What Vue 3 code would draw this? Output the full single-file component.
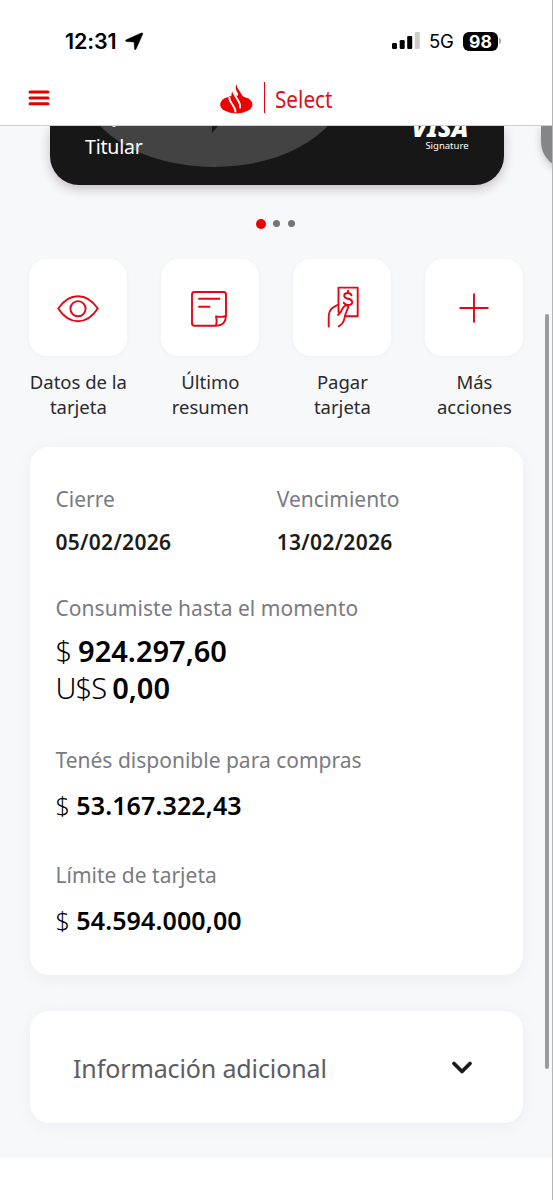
<script setup>
const details = [
  { id: 'a', label: 'Tenés disponible para compras', value: '53.167.322,43' },
  { id: 'b', label: 'Límite de tarjeta', value: '54.594.000,00' },
]
</script>

<template>
  <div class="screen">
    <header class="top">
      <div class="status">
        <span class="clock">12:31</span>
        <svg class="arrow" width="19" height="19" viewBox="0 0 19 19"><path d="M1.300 7.800 16.400 1.100Q18.200.5 17.600 2.300L11 17Q9.900 18.700 9.500 16.700L9.200 10.700Q9.100 10 8.400 9.900L1.600 9.500Q-.3 8.800 1.300 7.800Z" stroke="#000" stroke-width=".6" /></svg>
        <svg class="signal" width="28" height="18" viewBox="0 0 28 18">
          <rect x="0" y="11" width="5" height="6" rx="1.300" />
          <rect x="7.700" y="8" width="5" height="9" rx="1.300" />
          <rect x="15.200" y="4" width="5" height="13" rx="1.300" />
          <rect x="22.800" y="0" width="5" height="17" rx="1.300" fill="#ccc" />
        </svg>
        <span class="net">5G</span>
        <span class="battery">98</span>
        <i class="nub"></i>
      </div>
      <div class="bar">
        <svg class="menu" width="22" height="16" viewBox="0 0 22 16" stroke="#e60000" stroke-width="3" stroke-linecap="round"><path d="M2 2H20M2 8H20M2 13.700H20" /></svg>
        <svg class="flame" width="33" height="30" viewBox="0 0 33 30">
          <ellipse cx="16.300" cy="20.500" rx="16.100" ry="8.900" fill="#ec0000" />
          <path d="M16.600.3Q14.700 3.500 16.600 7L18 9.500V20H24V19Q25 15 22.300 11.500L18.200 5Q16.500 2.500 16.600.3ZM12.200 7.300Q10.500 10.500 12.300 14L17 22L20 18L13.800 10.500Q12.300 9 12.200 7.300Z" fill="#ec0000" />
          <path d="M9.300 13Q9.300 15.500 10.700 17.800L14.200 23.500Q15.600 26 15.400 28.300M13.600 6.500Q13.700 9.300 15.200 11.700L19 18Q20.700 21 20 24.200" fill="none" stroke="#fff" stroke-width="1.900" />
        </svg>
        <i class="divider"></i>
        <span class="brand">Select</span>
      </div>
    </header>

    <main>
      <section class="carousel">
        <div class="card">
          <svg class="oval" width="453" height="60" viewBox="0 0 453 60">
            <ellipse cx="164" cy="-44" rx="133" ry="85" fill="#434343" />
            <path d="M162 0H168L162 7Z" fill="#171717" />
            <circle cx="64" cy="-1.500" r="2.500" fill="#eee" />
          </svg>
          <span class="holder">Titular</span>
          <div class="visa"><b>VISA</b><span>Signature</span></div>
        </div>
        <div class="next"></div>
      </section>
      <div class="dots"><i class="on"></i><i></i><i></i></div>

      <nav class="actions">
        <div class="action">
          <div class="tile">
            <svg width="44" height="44" viewBox="0 0 44 44"><path d="M2.200 22.500Q10.500 10.200 22 10.200T41.800 22.500Q33.500 35.200 22 35.200T2.200 22.500Z" /><circle cx="22" cy="22.700" r="7.600" /></svg>
          </div>
          <span>Datos de la<br />tarjeta</span>
        </div>
        <div class="action">
          <div class="tile">
            <svg width="44" height="44" viewBox="0 0 44 44"><path d="M28 39.800H6.500Q4 39.800 4 37.300V8.500Q4 6 6.500 6H35.500Q38 6 38 8.500V30Q37.500 39.800 28 39.800ZM28 39.800Q29.500 35.500 28 30.500Q33 31.500 38 30M11 12.800H31.500M11 20.700H21.500" /></svg>
          </div>
          <span>Último<br />resumen</span>
        </div>
        <div class="action">
          <div class="tile">
            <svg class="hand" width="44" height="44" viewBox="0 0 44 44"><path d="M13.500 26V1.600H32.700V30.200H21.500M3.700 40.500V32Q3.700 24 8 21.500L13.300 18.500M13 29Q16.500 26 17.500 22.500Q19.700 18.800 22.500 19.500Q24 20.200 22.500 23L20 29.500Q19 38 13.700 40.300M26.500 9.300Q25.500 7 22.800 7Q19.200 7 19.200 9.800Q19.200 12 23 12.700Q27.200 13.500 27.200 16Q27.200 19 23.200 19Q20 19 18.800 16.700M23 4.700V7M23 19V20.500" /></svg>
          </div>
          <span>Pagar<br />tarjeta</span>
        </div>
        <div class="action">
          <div class="tile">
            <svg width="44" height="44" viewBox="0 0 44 44"><path d="M22 8.200V35.800M8.200 22H35.800" /></svg>
          </div>
          <span>Más<br />acciones</span>
        </div>
      </nav>

      <section class="panel">
        <div class="dates">
          <div><p class="label">Cierre</p><p class="date">05/02/2026</p></div>
          <div><p class="label">Vencimiento</p><p class="date">13/02/2026</p></div>
        </div>
        <div class="spent">
          <p class="label">Consumiste hasta el momento</p>
          <p class="big"><span>$</span> <b>924.297,60</b></p>
          <p class="big usd"><span>U$S</span> <b>0,00</b></p>
        </div>
        <div v-for="d in details" :key="d.id" class="detail">
          <p class="label">{{ d.label }}</p>
          <p class="mid"><span>$</span> <b>{{ d.value }}</b></p>
        </div>
      </section>

      <section class="more">
        <span>Información adicional</span>
        <svg width="22" height="16" viewBox="0 0 22 16"><path d="M3 3.500 11 11.500 19 3.500" fill="none" stroke="#1b1b1b" stroke-width="3.800" stroke-linecap="round" stroke-linejoin="round" /></svg>
      </section>
    </main>
    <div class="scroll"></div>
    <div class="edge"></div>
  </div>
</template>

<style>
body { margin: 0; background: #fff; }
</style>

<style scoped>
* { box-sizing: border-box; }
.screen { position: relative; width: 553px; height: 1200px; overflow: hidden; background: #fff; font-family: "Noto Sans", "Open Sans", sans-serif; color: #222; }
p { margin: 0; white-space: nowrap; }
.top { height: 126px; background: #fff; border-bottom: 1px solid #cfd0d2; }
.status { height: 70px; padding: 12px 0 0 65px; display: flex; align-items: center; font-family: Inter, sans-serif; color: #000; }
.clock { width: 56px; font-size: 21.500px; font-weight: 600; letter-spacing: -0.100px; }
.arrow { margin-left: 4px; }
.signal { margin-left: 248px; }
.net { width: 27px; margin-left: 9px; font-size: 18.500px; letter-spacing: -0.300px; font-weight: 400; }
.battery { margin-left: 7px; width: 35px; height: 19px; border-radius: 6px; background: #000; color: #fff; font-size: 17.500px; line-height: 19px; font-weight: 700; text-align: center; }
.nub { width: 2px; height: 6px; margin-left: 1px; border-radius: 0 2px 2px 0; background: #aaa; }
.bar { display: flex; height: 55px; padding-left: 28px; align-items: center; }
.flame { margin-left: 170px; margin-top: 2px; }
.divider { width: 1px; height: 31px; margin-left: 11px; background: #e00018; }
.brand { margin-left: 9.500px; margin-top: 3px; font-size: 23px; line-height: 30px; font-weight: 400; color: #e3101c; transform: scaleX(.9); transform-origin: left; }
main { height: 1032px; background: #f7f8fa; display: flex; flex-direction: column; overflow: hidden; }
.carousel { display: flex; gap: 37px; padding-left: 50px; height: 82px; flex: none; }
.card { position: relative; flex: none; width: 453.500px; height: 59px; border-radius: 0 0 29px 29px; background: #171717; box-shadow: 0 4px 11px rgba(50, 25, 40, .25); }
.oval { display: block; }
.holder { position: absolute; left: 35px; top: 8px; color: #fff; font-size: 19.500px; line-height: 26px; letter-spacing: -.2px; }
.visa { position: absolute; right: 35px; top: -13px; width: 70px; display: flex; flex-direction: column; align-items: flex-end; color: #fff; clip-path: inset(13px -5px 0 -5px); }
.visa b { font-size: 25px; line-height: 28px; height: 27px; font-style: italic; font-weight: 900; }
.visa span { font-size: 9.500px; line-height: 12px; }
.next { flex: none; width: 40px; height: 42px; border-radius: 0 0 0 26px; background: #858688; box-shadow: 0 3px 8px rgba(0, 0, 0, .2); }
.dots { display: flex; align-items: center; height: 10px; margin: 10.500px 0 0 256px; gap: 7.500px; flex: none; }
.dots i { width: 7.500px; height: 7.500px; border-radius: 50%; background: #73757d; }
.dots .on { width: 10px; height: 10px; background: #ec0000; margin-right: -1px; }
.actions { display: flex; gap: 34px; margin: 30.500px 0 0 29.400px; flex: none; }
.action { width: 98px; display: flex; flex-direction: column; align-items: center; }
.tile { width: 98px; height: 97px; border-radius: 18px; background: #fff; box-shadow: 0 1px 5px rgba(80, 90, 120, .05); display: flex; align-items: center; justify-content: center; }
.tile svg { fill: none; stroke: #e30613; stroke-width: 1.900; stroke-linecap: round; stroke-linejoin: round; }
.tile .hand { margin-left: 10px; }
.action span { margin-top: 13px; font-size: 18.500px; line-height: 25px; text-align: center; white-space: nowrap; color: #2a2a2c; }
.panel { flex: none; width: 493px; height: 528px; margin: 28px 0 0 30px; padding: 37.500px 25px 0 25.500px; border-radius: 19px; background: #fff; box-shadow: 0 3px 16px rgba(60, 70, 100, .06); }
.dates { display: flex; }
.dates > div { width: 221.500px; }
.label { font-size: 21px; line-height: 28px; font-weight: 400; color: #7a7b81; }
.date { margin-top: 15px; font-size: 21px; line-height: 28px; font-weight: 600; letter-spacing: .3px; color: #1b1b1b; }
.spent { margin-top: 38px; }
.big { font-size: 29px; line-height: 37px; color: #000; font-weight: 300; word-spacing: -1.500px; }
.usd { margin-top: -.8px; }
.usd span { letter-spacing: -.9px; }
.spent .label { margin-bottom: 10.800px; letter-spacing: .05px; }
.big b, .mid b { font-weight: 600; }
.mid b { letter-spacing: .13px; }
.mid { font-size: 25px; line-height: 34px; font-weight: 300; margin-top: 14px; color: #000; }
.detail { margin-top: 40px; }
.detail + .detail { margin-top: 39.500px; }
.more { flex: none; width: 493px; height: 112px; margin: 36px 0 0 30px; padding: 2px 50px 0 43px; border-radius: 19px; background: #fff; box-shadow: 0 3px 16px rgba(60, 70, 100, .06); display: flex; align-items: center; justify-content: space-between; font-size: 25px; font-weight: 400; letter-spacing: -.12px; color: #5c5d62; }
.scroll { position: absolute; left: 545px; top: 314px; width: 4px; height: 755px; border-radius: 2px; background: #9b9ca0; }
.edge { position: absolute; right: 0; top: 0; width: 1px; height: 1200px; background: #b4b4b6; }
</style>
